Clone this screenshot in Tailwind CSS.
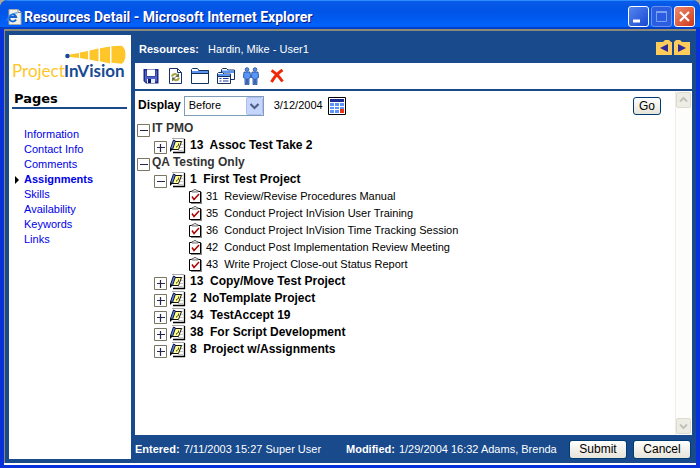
<!DOCTYPE html>
<html lang="en">
<head>
<meta charset="utf-8">
<title>Resources Detail</title>
<script src="https://cdn.jsdelivr.net/npm/@tailwindcss/browser@4"></script>
</head>
<body class="h-screen overflow-hidden bg-[#aca899] font-['Liberation_Sans',Arial,sans-serif] text-[11px] leading-[15px] text-black">
<svg class="hidden" aria-hidden="true">
  <symbol id="plus" viewBox="0 0 13 13"><path d="M.5.5h12v12H.5z" fill="#fff" stroke="#7b7563"/><path d="M3 6.500h8M6.500 3v8" stroke="#26264a" stroke-width="1.200"/></symbol>
  <symbol id="minus" viewBox="0 0 13 13"><path d="M.5.5h12v12H.5z" fill="#fff" stroke="#7b7563"/><path d="M3 6.500h8" stroke="#26264a" stroke-width="1.200"/></symbol>
  <symbol id="project" viewBox="0 0 17 16"><path d="M3 1h12v13H3z" fill="#fff"/><path d="M3 .5h12.500" stroke="#aaa"/><path d="M15.500 1v13.500H4" stroke="#000" stroke-width="1.300" fill="none"/><path d="M12 3.500h2M12 6.500h2M11 9.500h3M9 12.500h5" stroke="#c4c4c4"/><path d="M5.500 3.500h7l-3 8h-7z" fill="#ffff8c" stroke="#111"/><path d="M9.500 5.500v2l-2 1v1" stroke="#222" stroke-width=".8" fill="none"/><path d="M4.500 2l2 1-3 8.500-2-1z" fill="#5a8be8" stroke="#101040"/><path d="M1 10l2.500 1.500L1 14z" fill="#000"/></symbol>
  <symbol id="task" viewBox="0 0 13 15"><path d="M2 14.300h10.300V3" stroke="#888" stroke-width="1.400" fill="none"/><path d="M.5 2.500h11v11H.5z" fill="#fff" stroke="#000"/><path d="M3 3V1.500h1.500L5 .5h2l.5 1H9V3z" fill="#ddd" stroke="#777"/><path d="M3 7.500l2 3 5-5.500" fill="none" stroke="#b00000" stroke-width="1.500"/></symbol>
</svg>
<div class="flex h-full flex-col overflow-hidden rounded-t-lg bg-[#0831d9]">
  <header class="flex h-[29px] shrink-0 items-center bg-linear-to-b from-[#0a5be8] from-0% via-[#0054e6] via-40% to-[#0062fb] to-90% pt-1 pr-[5px] pl-1.5 shadow-[inset_0_1px_0_#2a8cff,inset_0_-2px_0_#0040c8]">
    <svg class="mr-[2px] h-4 w-4" viewBox="0 0 16 16"><path d="M3 .5h9l3 3v12H3z" fill="#f4f2e4" stroke="#aaa"/><path d="M12 .5v3h3" fill="#fff" stroke="#888"/><path d="M10 10.500A3.500 3.500 0 1 1 10.200 8H4" fill="none" stroke="#1262d4" stroke-width="1.800"/><path d="M.8 12C0 9 7 3 11.500 4" fill="none" stroke="#2b8cf0"/></svg>
    <h1 class="grow font-['Roboto',sans-serif] text-[14px] leading-4 font-bold whitespace-nowrap text-white [text-shadow:1px_1px_#0a1883]">Resources Detail - Microsoft Internet Explorer</h1>
    <div class="flex gap-0.5">
      <button aria-label="Minimize" class="h-[21px] w-[21px] rounded-[3px] border border-white bg-linear-to-br from-[#5485f0] to-[#1c47d0]"><svg viewBox="0 0 19 19"><path d="M4 14h7" stroke="#fff" stroke-width="3"/></svg></button>
      <button aria-label="Maximize" disabled class="h-[21px] w-[21px] rounded-[3px] border border-[#6b93ee] bg-[#2a5de0]"><svg viewBox="0 0 19 19"><path d="M4.500 5h10v9.500h-10z" fill="none" stroke="#7d9ff0"/><path d="M4 5h11" stroke="#7d9ff0" stroke-width="2"/></svg></button>
      <button aria-label="Close" class="h-[21px] w-[21px] rounded-[3px] border border-white bg-linear-to-br from-[#ee8a6c] to-[#cc3410]"><svg viewBox="0 0 19 19"><path d="M5 5l9 9M14 5l-9 9" stroke="#fff" stroke-width="2.200"/></svg></button>
    </div>
  </header>
  <div class="flex min-h-0 grow flex-col border-x-4 border-b-[3px] border-[#0831d9] bg-white pb-[2px]">
    <div class="flex min-h-0 grow gap-1 border-t-2 border-l border-[#8b8878] bg-[#184a8c] px-1 pt-1">
      <nav class="mb-1 w-[122px] shrink-0 bg-white pt-[10px] pr-1 pl-[3px]">
        <svg class="h-[38px] w-full" viewBox="0 0 115 38" role="img" aria-label="ProjectInVision">
          <path d="M58 9.500l9-1.500v5l-9-1zM68 7.500l8-1.500v8.500l-8-1.500zM77.500 5.500l9-2v13l-9-2zM88 3.200l10-1.700v17l-10-2.200zM99.500 1.200L110 .8q3.500 3 3.500 9t-3.500 9l-10.500-1z" fill="#ffc629"/>
          <circle cx="55.500" cy="11" r="2.300" fill="#184a94"/>
          <text x="0" y="32" font-family="Lato, sans-serif" font-size="17" fill="#ffc629">Project</text>
          <text x="52" y="32" font-family="Lato, sans-serif" font-size="17" font-weight="700" fill="#184a94">InVision</text>
        </svg>
        <h2 class="mt-2 border-b-2 border-[#184a8c] pl-[2px] font-['DejaVu_Sans',sans-serif] text-[13px] leading-4 font-bold">Pages</h2>
        <ul class="mt-[18px] pl-3 text-[#0000e8]">
          <li><a href="#">Information</a></li>
          <li><a href="#">Contact Info</a></li>
          <li><a href="#">Comments</a></li>
          <li class="-ml-[9px] flex items-center gap-[5px]"><svg class="h-2 w-1" viewBox="0 0 4 8"><path d="M0 0l4 4-4 4z"/></svg><a href="#" class="font-bold">Assignments</a></li>
          <li><a href="#">Skills</a></li>
          <li><a href="#">Availability</a></li>
          <li><a href="#">Keywords</a></li>
          <li><a href="#">Links</a></li>
        </ul>
      </nav>
      <main class="flex min-w-0 grow flex-col">
        <div class="flex h-7 shrink-0 items-center pl-1 text-white">
          <p class="grow"><b class="mr-1.5">Resources:</b> Hardin, Mike - User1</p>
          <div class="-mt-1 mr-[2px] flex gap-[2px]">
            <button aria-label="Previous"><svg class="h-[15px] w-4" viewBox="0 0 16 15"><path d="M0 2h7l2-2h4l2 2h1v13H0z" fill="#ffcb5a"/><path d="M12 4v8L4 8z" fill="#2a2a9c"/></svg></button>
            <button aria-label="Next"><svg class="h-[15px] w-4" viewBox="0 0 16 15"><path d="M0 2l2-2h4l2 2h8v13H0z" fill="#ffcb5a"/><path d="M4 4v8l8-4z" fill="#2a2a9c"/></svg></button>
          </div>
        </div>
        <div class="flex h-[26px] shrink-0 items-center gap-2 bg-white pl-2">
          <button aria-label="Save"><svg class="h-4 w-4" viewBox="0 0 16 16"><path d="M.5 1h15v14.500H3L.5 13z" fill="#1c2a84"/><path d="M2 2.500h1.500v6h9v-6H14v11H2z" fill="#4d62c8"/><path d="M4 1.500h8V8H4z" fill="#fff"/><path d="M4 11h8v4H4z" fill="#e8ecf8"/><path d="M5 11h3v4H5z" fill="#0c1668"/></svg></button>
          <button aria-label="Refresh"><svg class="h-4 w-4" viewBox="0 0 16 16"><path d="M2.500.5h8l4 4v11h-12z" fill="#fff" stroke="#183070"/><path d="M10.500.5v4h4" fill="none" stroke="#183070"/><path d="M5 8.500q.5-2.500 3.500-2.500l2 1M12 9.500q-.5 2.800-3.500 2.800l-2-1" fill="none" stroke="#a8a440" stroke-width="1.900"/><path d="M12 5v4H8zM5 13.500V9.500h4z" fill="#5e6c50"/></svg></button>
          <button aria-label="Open folder"><svg class="h-4 w-[18px]" viewBox="0 0 18 16"><path d="M.5 15.500V1.500l1-1h5l1.500 2h9.500v13z" fill="#fff" stroke="#12305c"/><path d="M1 3h16v2H1z" fill="#5a94f0"/><path d="M.5 5.500h17M7.500 2.500h10" stroke="#12305c"/></svg></button>
          <button aria-label="Copy folder"><svg class="h-4 w-[18px]" viewBox="0 0 18 16"><path d="M4.500 11.500v-10l1-1h4l1.500 1.500h6.500v9.500z" fill="#fff" stroke="#12305c"/><path d="M5 2.500h12v2.500H5z" fill="#5a94f0"/><path d="M.5 15.500v-10l1-1h4l1.500 1.500h6.500v9.500z" fill="#fff" stroke="#12305c"/><path d="M1 6h12v2H1z" fill="#5a94f0"/><path d="M1 8.500h12" stroke="#12305c"/><path d="M2.500 10.500h2M6 10.500h5.500M2.500 13h2M6 13h5.500" stroke="#2038a0"/></svg></button>
          <button aria-label="Team"><svg class="h-[18px] w-4" viewBox="0 0 16 18"><g fill="#5a94f8" stroke="#1c4690" stroke-width=".8"><circle cx="4" cy="2.500" r="1.800"/><circle cx="12" cy="2.500" r="1.800"/><path d="M1 5h6l.7 5.500-1.700.5v6.500H4.400V12h-.8v5.500H2V11L.3 10.500zM9 5h6l.7 5.500-1.700.5v6.500h-1.600V12h-.8v5.500H10V11l-1.700-.5z"/></g></svg></button>
          <button aria-label="Delete"><svg class="ml-[3px] h-[14px] w-[14px]" viewBox="0 0 14 14"><path d="M1.500 1.500Q7 4.500 12.500 12.500M12.500 1Q6 5 1.500 13" fill="none" stroke="#f02808" stroke-width="3"/></svg></button>
        </div>
        <div class="mt-[2px] flex min-h-0 grow bg-white">
          <div class="min-w-0 grow pl-[2px]">
            <form class="flex h-[29px] items-center pl-px">
              <label for="when" class="text-[12px] font-bold">Display</label>
              <div class="relative ml-[3px] h-5 w-20">
                <select id="when" class="h-full w-full appearance-none border border-[#7f9db9] bg-white pl-1"><option>Before</option></select>
                <svg class="pointer-events-none absolute top-px right-px h-[18px] w-[17px]" viewBox="0 0 17 18"><rect x=".5" y=".5" width="16" height="17" rx="1" fill="#c6d5fb" stroke="#aebfee"/><path d="M4.500 7l4 4 4-4" fill="none" stroke="#4d6185" stroke-width="2.200"/></svg>
              </div>
              <input aria-label="Date" value="3/12/2004" class="ml-2 w-14 pl-[2px]">
              <button type="button" aria-label="Choose date"><svg class="h-[18px] w-[18px]" viewBox="0 0 18 18"><path d="M.5.5h17v17H.5z" fill="#fff" stroke="#000"/><path d="M2 2h14v3H2z" fill="#1c2a94"/><path d="M2 6h4v3H2zM7 6h4v3H7zM12 6h4v3h-4zM2 10h4v2H2zM7 10h4v2H7zM12 10h4v2h-4zM2 13h4v3H2zM7 13h4v3H7z" fill="#5a94f8"/><path d="M12 12h4v4h-4z" fill="#f03010"/></svg></button>
              <button type="button" class="mr-[14px] ml-auto h-[18px] w-7 rounded-[3px] border border-[#003c74] bg-linear-to-b from-white to-[#e6e3d8] text-[12px] leading-4">Go</button>
            </form>
            <ul class="text-[12px] leading-[17px] font-bold">
              <li><div class="flex h-[17px] items-center gap-[2px] text-[#333]"><svg class="mt-1 h-[13px] w-[13px]"><use href="#minus"/></svg>IT PMO</div>
                <ul class="pl-[17px]">
                  <li class="flex h-[17px] items-center gap-[2px]"><svg class="mt-1 h-[13px] w-[13px]"><use href="#plus"/></svg><svg class="mr-[2px] h-4 w-[17px]"><use href="#project"/></svg>13&nbsp; Assoc Test Take 2</li>
                </ul></li>
              <li><div class="flex h-[17px] items-center gap-[2px] text-[#333]"><svg class="mt-1 h-[13px] w-[13px]"><use href="#minus"/></svg>QA Testing Only</div>
                <ul class="pl-[17px]">
                  <li><div class="flex h-[17px] items-center gap-[2px]"><svg class="mt-1 h-[13px] w-[13px]"><use href="#minus"/></svg><svg class="mr-[2px] h-4 w-[17px]"><use href="#project"/></svg>1&nbsp; First Test Project</div>
                    <ul class="pl-[35px] text-[11px] font-normal">
                      <li class="flex h-[17px] items-center gap-1"><svg class="h-[15px] w-[13px]"><use href="#task"/></svg>31&nbsp; Review/Revise Procedures Manual</li>
                      <li class="flex h-[17px] items-center gap-1"><svg class="h-[15px] w-[13px]"><use href="#task"/></svg>35&nbsp; Conduct Project InVision User Training</li>
                      <li class="flex h-[17px] items-center gap-1"><svg class="h-[15px] w-[13px]"><use href="#task"/></svg>36&nbsp; Conduct Project InVision Time Tracking Session</li>
                      <li class="flex h-[17px] items-center gap-1"><svg class="h-[15px] w-[13px]"><use href="#task"/></svg>42&nbsp; Conduct Post Implementation Review Meeting</li>
                      <li class="flex h-[17px] items-center gap-1"><svg class="h-[15px] w-[13px]"><use href="#task"/></svg>43&nbsp; Write Project Close-out Status Report</li>
                    </ul></li>
                  <li class="flex h-[17px] items-center gap-[2px]"><svg class="mt-1 h-[13px] w-[13px]"><use href="#plus"/></svg><svg class="mr-[2px] h-4 w-[17px]"><use href="#project"/></svg>13&nbsp; Copy/Move Test Project</li>
                  <li class="flex h-[17px] items-center gap-[2px]"><svg class="mt-1 h-[13px] w-[13px]"><use href="#plus"/></svg><svg class="mr-[2px] h-4 w-[17px]"><use href="#project"/></svg>2&nbsp; NoTemplate Project</li>
                  <li class="flex h-[17px] items-center gap-[2px]"><svg class="mt-1 h-[13px] w-[13px]"><use href="#plus"/></svg><svg class="mr-[2px] h-4 w-[17px]"><use href="#project"/></svg>34&nbsp; TestAccept 19</li>
                  <li class="flex h-[17px] items-center gap-[2px]"><svg class="mt-1 h-[13px] w-[13px]"><use href="#plus"/></svg><svg class="mr-[2px] h-4 w-[17px]"><use href="#project"/></svg>38&nbsp; For Script Development</li>
                  <li class="flex h-[17px] items-center gap-[2px]"><svg class="mt-1 h-[13px] w-[13px]"><use href="#plus"/></svg><svg class="mr-[2px] h-4 w-[17px]"><use href="#project"/></svg>8&nbsp; Project w/Assignments</li>
                </ul></li>
            </ul>
          </div>
          <div class="flex w-[17px] shrink-0 flex-col justify-between border-l border-[#eeede5] bg-[#fdfdfb] py-px">
            <svg class="h-4 w-[15px]" viewBox="0 0 15 16"><rect x=".5" y=".5" width="14" height="15" rx="1.500" fill="#eeede5" stroke="#dddbd0"/><path d="M4 9.500l3.500-3.500L11 9.500" fill="none" stroke="#c4c2b8" stroke-width="2"/></svg>
            <svg class="h-4 w-[15px]" viewBox="0 0 15 16"><rect x=".5" y=".5" width="14" height="15" rx="1.500" fill="#eeede5" stroke="#dddbd0"/><path d="M4 6.500l3.500 3.500L11 6.500" fill="none" stroke="#c4c2b8" stroke-width="2"/></svg>
          </div>
        </div>
        <footer class="flex h-7 shrink-0 items-center text-white">
          <p class="w-[211px]"><b class="mr-px">Entered:</b> 7/11/2003 15:27 Super User</p>
          <p class="grow"><b class="mr-px">Modified:</b> 1/29/2004 16:32 Adams, Brenda</p>
          <div class="mr-px flex gap-[6px]">
            <button class="h-[19px] w-[58px] rounded-[3px] border border-[#003c74] bg-linear-to-b from-white to-[#e6e3d8] text-[12px] leading-4 text-black">Submit</button>
            <button class="h-[19px] w-[58px] rounded-[3px] border border-[#003c74] bg-linear-to-b from-white to-[#e6e3d8] text-[12px] leading-4 text-black">Cancel</button>
          </div>
        </footer>
      </main>
    </div>
  </div>
</div>
</body>
</html>
